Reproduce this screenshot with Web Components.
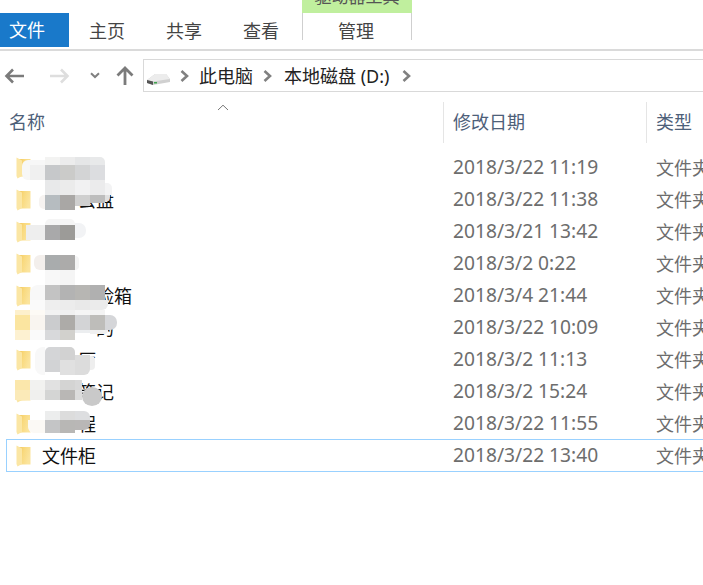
<!DOCTYPE html>
<html lang="zh-CN">
<head>
<meta charset="utf-8">
<title>本地磁盘 (D:)</title>
<style>
    html, body {
        margin: 0;
        background: #fff;
    }
    body {
        position: relative;
        width: 703px;
        height: 585px;
        overflow: hidden;
        font-family: "Noto Sans", "Noto Sans CJK SC", sans-serif;
        font-size: 18px;
    }
</style>
</head>
<body>
<fx-ribbon></fx-ribbon>
<fx-nav></fx-nav>
<fx-columns></fx-columns>
<fx-list>
    <fx-row date="2018/3/22 11:19"></fx-row>
    <fx-row date="2018/3/22 11:38" skip="2">云盘</fx-row>
    <fx-row date="2018/3/21 13:42"></fx-row>
    <fx-row date="2018/3/2 0:22"></fx-row>
    <fx-row date="2018/3/4 21:44" skip="3">险箱</fx-row>
    <fx-row date="2018/3/22 10:09" skip="3">的</fx-row>
    <fx-row date="2018/3/2 11:13" skip="2">厅</fx-row>
    <fx-row date="2018/3/2 15:24" skip="2">笔记</fx-row>
    <fx-row date="2018/3/22 11:55" skip="2">程</fx-row>
    <fx-row date="2018/3/22 13:40" selected>文件柜</fx-row>
</fx-list>
<fx-mosaic></fx-mosaic>

<script>
class FxRibbon extends HTMLElement {
    constructor() {
        super();
        this.attachShadow({ mode: 'open' });
        this.shadowRoot.innerHTML = `
            <style>
                :host {
                    display: block;
                    height: 51px;
                    box-sizing: border-box;
                    border-bottom: 2px solid #dadada;
                    color: #444;
                }
                #title {
                    display: flex;
                    height: 13px;
                }
                #context {
                    margin-left: 302px;
                    width: 110px;
                    height: 13px;
                    overflow: hidden;
                    background: #c0ef9e;
                    text-align: center;
                    font-size: 17px;
                    line-height: 17px;
                    color: #555;
                }
                #context span {
                    display: block;
                    margin-top: -12px;
                }
                #tabs {
                    display: flex;
                    height: 34px;
                    line-height: 37px;
                }
                .tab {
                    white-space: nowrap;
                }
                #file {
                    width: 69px;
                    box-sizing: border-box;
                    padding-left: 9px;
                    background: #1979ca;
                    color: #fff;
                    line-height: 34px;
                }
                #home { margin-left: 20px; width: 36px; }
                #share { margin-left: 41px; width: 36px; }
                #view { margin-left: 41px; width: 36px; }
                #manage {
                    margin-left: 23px;
                    width: 108px;
                    box-sizing: content-box;
                    height: 27px;
                    line-height: 37px;
                    padding-left: 0;
                    text-indent: 35px;
                    border: solid #cfcfcf;
                    border-width: 0 1px;
                }
            </style>
            <div id="title">
                <div id="context"><span>驱动器工具</span></div>
            </div>
            <div id="tabs">
                <div class="tab" id="file">文件</div>
                <div class="tab" id="home">主页</div>
                <div class="tab" id="share">共享</div>
                <div class="tab" id="view">查看</div>
                <div class="tab" id="manage">管理</div>
            </div>
        `;
    }
}

class FxNav extends HTMLElement {
    constructor() {
        super();
        this.attachShadow({ mode: 'open' });
        const chevron = `<svg class="crumb" width="9" height="12" viewBox="0 0 9 12"><path d="M1.5 1 L7 6 L1.5 11" fill="none" stroke="#808080" stroke-width="2.6"/></svg>`;
        this.shadowRoot.innerHTML = `
            <style>
                :host {
                    display: flex;
                    align-items: center;
                    height: 33px;
                    margin-top: 8px;
                    color: #222;
                }
                svg { display: block; flex: none; }
                #back { margin-left: 4px; }
                #forward { margin-left: 26px; }
                #recent { margin-left: 20px; }
                #up { margin-left: 16px; }
                #address {
                    display: flex;
                    align-items: center;
                    flex: none;
                    width: 600px;
                    height: 33px;
                    box-sizing: border-box;
                    margin-left: 9px;
                    border: 1px solid #d9d9d9;
                    padding-left: 3px;
                    white-space: nowrap;
                }
                #address span { padding-bottom: 2px; }
                #drive { margin-top: 7px; }
                .crumb { margin: 0 10px 0 10px; }
                #second { margin-right: 12px; }
                .crumb:last-child { margin-left: 13px; }
            </style>
            <svg id="back" width="20" height="16" viewBox="0 0 20 16"><path d="M20 8 H3 M9 1.5 L2.5 8 L9 14.5" fill="none" stroke="#7b7b7b" stroke-width="2.6"/></svg>
            <svg id="forward" width="20" height="16" viewBox="0 0 20 16"><path d="M0 8 H17 M11 1.5 L17.5 8 L11 14.5" fill="none" stroke="#dedede" stroke-width="2.6"/></svg>
            <svg id="recent" width="10" height="7" viewBox="0 0 10 7"><path d="M1 1.2 L5 5 L9 1.2" fill="none" stroke="#808080" stroke-width="2"/></svg>
            <svg id="up" width="18" height="19" viewBox="0 0 18 19"><path d="M9 19 V3 M1.5 9.5 L9 2 L16.5 9.5" fill="none" stroke="#7b7b7b" stroke-width="2.8"/></svg>
            <div id="address">
                <svg id="drive" width="23" height="13" viewBox="0 0 23 13">
                    <path d="M0 7 L8 1 H19 L23 6 V9 L6 12 L0 10 Z" fill="#d0d0d0"/>
                    <path d="M0 7 L8 1 H19 L23 6 L6 8.5 Z" fill="#ececec"/>
                    <path d="M0 7 L6 8.5 V12 L0 10 Z" fill="#555"/>
                    <rect x="7" y="9" width="3" height="1.5" fill="#3fa34d"/>
                </svg>
                ${chevron}<span>此电脑</span>${chevron.replace('class="crumb"', 'class="crumb" id="second"')}<span>本地磁盘 (D:)</span>${chevron}
            </div>
        `;
    }
}

class FxColumns extends HTMLElement {
    constructor() {
        super();
        this.attachShadow({ mode: 'open' });
        this.shadowRoot.innerHTML = `
            <style>
                :host {
                    display: grid;
                    grid-template-columns: 443px 203px 1fr;
                    height: 41px;
                    margin-top: 10px;
                    color: #4d6079;
                    white-space: nowrap;
                }
                .col {
                    position: relative;
                    line-height: 41px;
                    padding-left: 9px;
                    box-sizing: border-box;
                }
                .col + .col { border-left: 1px solid #e5e5e5; }
                .col:first-child { padding-left: 11px; }
                #name { margin-left: 0; }
                #sort {
                    position: absolute;
                    left: 217px;
                    top: 2px;
                    display: block;
                }
            </style>
            <div class="col"><span id="name">名称</span><svg id="sort" width="12" height="7" viewBox="0 0 12 7"><path d="M1 6 L6 1.2 L11 6" fill="none" stroke="#777" stroke-width="1"/></svg></div>
            <div class="col">修改日期</div>
            <div class="col">类型</div>
        `;
    }
}

class FxList extends HTMLElement {
    constructor() {
        super();
        this.attachShadow({ mode: 'open' });
        this.shadowRoot.innerHTML = `
            <style>
                :host {
                    display: block;
                    margin-top: 8px;
                }
            </style>
            <slot></slot>
        `;
    }
}

class FxRow extends HTMLElement {
    constructor() {
        super();
        this.attachShadow({ mode: 'open' });
        const date = this.getAttribute('date') || '';
        const skip = Number(this.getAttribute('skip') || 0);
        const grad = 'g' + Math.random().toString(36).slice(2, 7);
        this.shadowRoot.innerHTML = `
            <style>
                :host {
                    display: grid;
                    grid-template-columns: 446px 203px 60px;
                    height: 33px;
                    margin-bottom: -1px;
                    box-sizing: border-box;
                    margin-left: 6px;
                    border: 1px solid transparent;
                    border-right: 0;
                    align-items: center;
                    white-space: nowrap;
                    overflow: hidden;
                }
                :host([selected]) { border-color: #99d1ff; }
                #name {
                    display: flex;
                    align-items: center;
                    color: #111;
                    padding-left: 9px;
                }
                #text {
                    margin-left: ${11 + skip * 18}px;
                    padding-bottom: 2px;
                }
                svg { display: block; flex: none; }
                #date, #type {
                    color: #6d6d6d;
                    padding-bottom: 2px;
                }
                #date { font-size: 19.2px; }
            </style>
            <div id="name">
                <svg width="15" height="22" viewBox="0 0 15 22">
                    <defs>
                        <linearGradient id="${grad}" x1="0" y1="0" x2="1" y2="0.4">
                            <stop offset="0" stop-color="#f3c656"/>
                            <stop offset="0.5" stop-color="#f9da80"/>
                            <stop offset="1" stop-color="#fbe49d"/>
                        </linearGradient>
                    </defs>
                    <path d="M2 2 H14.5 V19.5 H2 Z" fill="url(#${grad})"/>
                    <path d="M0.5 0.5 L6 3.5 V19 L1.5 21.5 L0.5 19 Z" fill="#fbe6a4"/>
                </svg>
                <span id="text"><slot></slot></span>
            </div>
            <div id="date">${date}</div>
            <div id="type">文件夹</div>
        `;
    }
}

// 打码区域，坐标是整页坐标，第六项是圆角
const PATCHES = [
    [22,160,83,20,'#f7f7f7','6px'],
    [45,157,15,8,'#f3f3f2'],[60,157,15,8,'#ececec'],[75,157,15,8,'#e5e6e7'],[90,157,15,8,'#e8e9ea','0 5px 0 0'],
    [30,165,15,15,'#f0f0f0'],[45,165,15,15,'#c6c8ca'],[60,165,15,15,'#cbcbc9'],[75,165,15,15,'#d3d4d5'],[90,165,15,15,'#dcdde0'],
    [45,180,15,15,'#e8e9ea'],[60,180,15,15,'#ebebeb'],[75,180,15,15,'#f1f1f2'],[90,180,15,15,'#ebebec'],[105,183,7,12,'#f3f3f4','0 5px 0 0'],
    [39,195,6,14,'#f6f3f1','5px 0 0 5px'],[45,195,15,15,'#b6bcc0'],[60,195,15,15,'#a9a7a5'],[75,195,15,11,'#cfcfcf'],[90,195,15,8,'#bdbdbd'],[105,195,5,7,'#e0e0e0','0 0 5px 0'],
    [45,219,30,6,'#f5f5f5','5px 5px 0 0'],
    [26,225,19,15,'#eeeeee'],[45,225,15,15,'#a9a9aa'],[60,225,15,15,'#9c9b98'],[75,223,11,15,'#f2f3f5','0 7px 7px 0'],
    [34,255,11,15,'#f3efec','6px 0 0 6px'],[45,255,15,15,'#a9acad'],[60,255,15,15,'#acabaa'],[75,256,4,14,'#f4f4f4','0 4px 4px 0'],
    [45,270,15,15,'#f8f8f8'],[60,270,15,15,'#f5f5f5'],
    [30,285,15,15,'#f8f8f8','8px 0 0 0'],[45,285,15,15,'#c3c3c3'],[60,285,15,15,'#b3b3b3'],[75,285,15,15,'#b7b6b3'],[90,285,15,15,'#b0b0b0'],
    [30,300,15,15,'#fafafa'],[45,300,15,15,'#eeeeee'],[60,300,15,15,'#ececec'],[75,300,15,15,'#e9e9e9'],[90,300,18,10,'#ebebeb','0 0 6px 0'],
    [15,310,15,5,'#fdf0cc'],[30,310,15,5,'#fdfaf5'],[45,310,15,5,'#f2f2f2'],[60,310,15,5,'#f0f0f0'],[75,310,15,5,'#f5f5f5'],[90,310,15,5,'#f3f3f3'],
    [15,315,15,15,'#fbe5a0'],[30,315,15,15,'#f9f5f0'],[45,315,15,15,'#cbccce'],[60,315,15,15,'#adaba8'],[75,315,15,15,'#d3d4d6'],[90,315,15,15,'#bebdba'],[105,315,12,15,'#d5d6d9','0 7px 7px 0'],
    [15,330,15,10,'#fdf1d1'],[30,330,15,10,'#fafafa'],[45,330,15,10,'#d8d9db'],[60,330,15,10,'#d2d1cd'],[75,330,15,3,'#eceef0'],[90,330,18,4,'#f0f0f0','0 0 4px 0'],
    [35,347,10,28,'#f8f8f8','8px 0 0 8px'],[45,347,15,13,'#d4d5d7','5px 0 0 0'],[60,347,15,13,'#d2d2d2','0 5px 0 0'],
    [75,355,15,5,'#dcdcdc'],[45,360,15,12,'#d2d3d5'],[60,360,15,15,'#e0e0e0'],[75,360,15,15,'#dcdcdc','0 0 6px 0'],[90,356,5,14,'#eeeeee','0 4px 4px 0'],
    [15,380,15,10,'#fbe7ab'],[30,380,15,10,'#f2f2f0'],[45,380,15,10,'#e1e1e1'],[60,380,15,10,'#d4d4d3'],[75,380,7,10,'#d8d8d8'],
    [15,390,15,10,'#fbeab8'],[30,390,15,10,'#f0f0ee'],[45,390,15,10,'#d4d5d4'],[60,390,15,10,'#b9b7b5'],[75,390,7,10,'#dcdcdc'],
    [30,411,15,9,'#ffffff'],[45,411,15,9,'#eceded'],[60,411,15,9,'#dcdcdc'],[75,411,15,9,'#dddee0','0 6px 0 0'],
    [28,420,17,13,'#fbf9f5','0 0 0 6px'],[45,420,15,13,'#c4c5c6'],[60,420,15,13,'#b8b7b5'],[75,420,15,10,'#b9b7b6','0 0 6px 0']
];

class FxMosaic extends HTMLElement {
    constructor() {
        super();
        this.attachShadow({ mode: 'open' });
        const cells = PATCHES.map(p => `<i style="left:${p[0]}px;top:${p[1]}px;width:${p[2]}px;height:${p[3]}px;background:${p[4]};border-radius:${p[5] || 0}"></i>`).join('');
        this.shadowRoot.innerHTML = `
            <style>
                :host {
                    position: absolute;
                    top: 0;
                    left: 0;
                }
                i { position: absolute; display: block; }
                #dot {
                    left: 82px;
                    top: 387px;
                    width: 20px;
                    height: 19px;
                    border-radius: 50%;
                    background: #c9c9c9;
                }
            </style>
            ${cells}
            <i id="dot"></i>
        `;
    }
}

customElements.define('fx-ribbon', FxRibbon);
customElements.define('fx-nav', FxNav);
customElements.define('fx-columns', FxColumns);
customElements.define('fx-list', FxList);
customElements.define('fx-row', FxRow);
customElements.define('fx-mosaic', FxMosaic);
</script>
</body>
</html>
